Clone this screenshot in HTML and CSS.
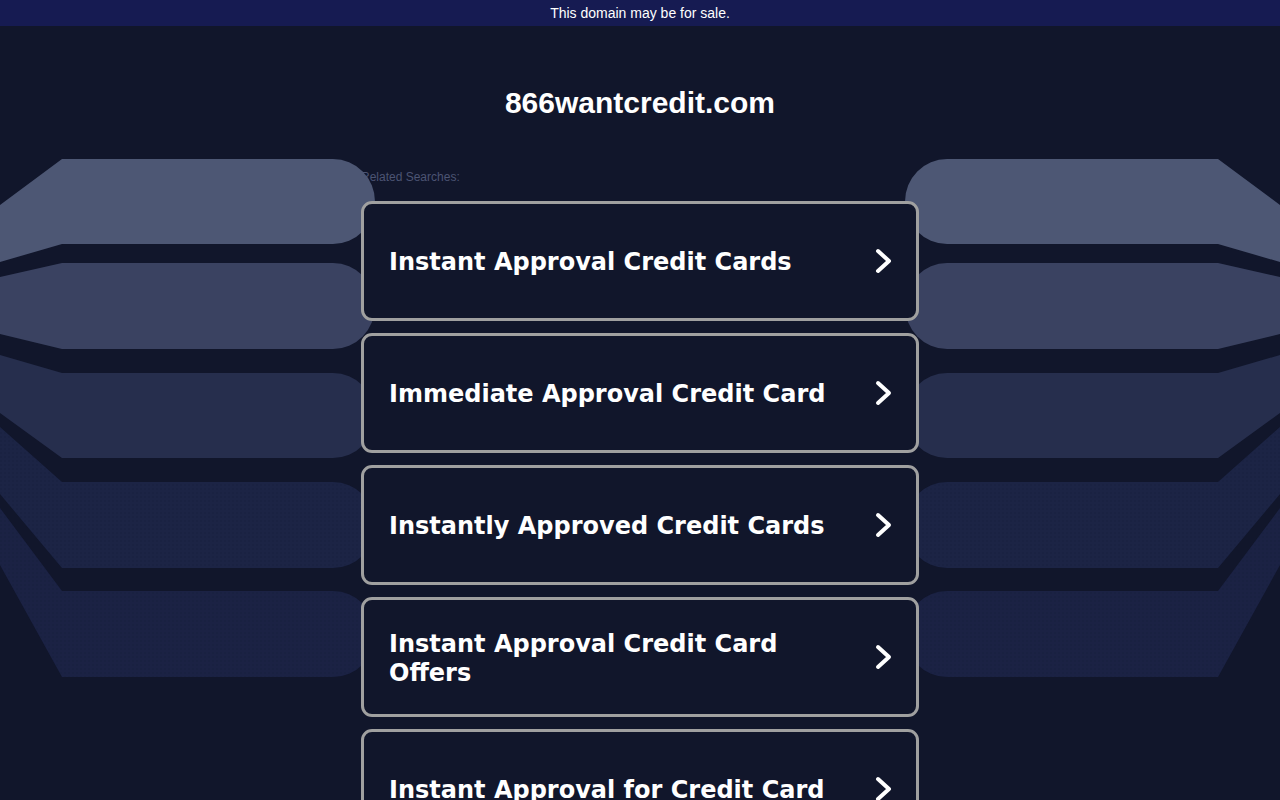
FILE: index.html
```html
<!DOCTYPE html>
<html lang="en">
<head>
<meta charset="utf-8">
<title>866wantcredit.com</title>
<link rel="stylesheet" href="styles.css">
</head>
<body>
<div class="topbar">This domain may be for sale.</div>
<h1 class="domain">866wantcredit.com</h1>
<div class="content">
  <div class="label">Related Searches:</div>
  <svg class="bg" width="1280" height="800" viewBox="0 0 1280 800" aria-hidden="true">
    <defs>
      <pattern id="dots" width="4" height="4" patternUnits="userSpaceOnUse">
        <circle cx="1" cy="1" r="0.7" fill="#121933" opacity="0.6"/>
      </pattern>
      <g id="side">
        <path fill="#4d5774" d="M0,205 L62,159 L333,159 A42,42.5 0 0 1 333,244 L62,244 L0,262 Z"/>
        <path fill="#3a4261" d="M0,277 L62,263 L333,263 A42,43 0 0 1 333,349 L62,349 L0,334 Z"/>
        <path fill="#262e4d" d="M0,355 L62,373 L333,373 A42,42.5 0 0 1 333,458 L62,458 L0,413 Z"/>
        <path fill="#1c2445" d="M0,427 L62,482 L333,482 A42,43 0 0 1 333,568 L62,568 L0,494 Z"/>
        <path fill="url(#dots)" d="M0,427 L62,482 L333,482 A42,43 0 0 1 333,568 L62,568 L0,494 Z"/>
        <path fill="#1b2244" d="M0,508 L62,591 L333,591 A42,43 0 0 1 333,677 L62,677 L0,565 Z"/>
        <path fill="url(#dots)" d="M0,508 L62,591 L333,591 A42,43 0 0 1 333,677 L62,677 L0,565 Z"/>
      </g>
    </defs>
    <use href="#side"/>
    <use href="#side" transform="translate(1280,0) scale(-1,1)"/>
  </svg>
  <div class="list">
    <a class="card" href="#"><span class="text">Instant Approval Credit Cards</span><svg class="chev" viewBox="0 0 18 26" width="18" height="26"><polyline points="4,3 15,13 4,23"/></svg></a>
    <a class="card" href="#"><span class="text">Immediate Approval Credit Card</span><svg class="chev" viewBox="0 0 18 26" width="18" height="26"><polyline points="4,3 15,13 4,23"/></svg></a>
    <a class="card" href="#"><span class="text">Instantly Approved Credit Cards</span><svg class="chev" viewBox="0 0 18 26" width="18" height="26"><polyline points="4,3 15,13 4,23"/></svg></a>
    <a class="card" href="#"><span class="text">Instant Approval Credit Card Offers</span><svg class="chev" viewBox="0 0 18 26" width="18" height="26"><polyline points="4,3 15,13 4,23"/></svg></a>
    <a class="card" href="#"><span class="text">Instant Approval for Credit Card</span><svg class="chev" viewBox="0 0 18 26" width="18" height="26"><polyline points="4,3 15,13 4,23"/></svg></a>
  </div>
</div>
</body>
</html>
```
FILE: styles.css
```css
html, body {
  margin: 0;
  padding: 0;
}
body {
  background: #11162b;
  color: #fff;
  font-family: "Liberation Sans", Arial, sans-serif;
  overflow: hidden;
  height: 800px;
}
.topbar {
  height: 26px;
  background: #161b52;
  color: #fff;
  font-size: 14px;
  line-height: 26px;
  text-align: center;
}
.domain {
  margin: 59px 0 0;
  font-size: 30px;
  line-height: 36px;
  font-weight: bold;
  text-align: center;
  color: #fff;
}
.content {
  width: 558px;
  margin: 49px auto 0;
}
.label {
  font-size: 12px;
  line-height: 14px;
  color: #4c5473;
  margin-bottom: 17px;
}
.bg {
  position: absolute;
  top: 0;
  left: 0;
}
.list {
  position: relative;
  display: flex;
  flex-direction: column;
  gap: 12px;
}
.card {
  box-sizing: border-box;
  height: 120px;
  border: 3px solid #a0a0a0;
  border-radius: 11px;
  background: #11162b;
  display: flex;
  align-items: center;
  padding: 0 24px 0 25px;
  gap: 25px;
  text-decoration: none;
  color: #fff;
}
.text {
  flex: 1;
  padding-top: 3px;
  font-family: "DejaVu Sans", Verdana, sans-serif;
  font-weight: bold;
  font-size: 24px;
  line-height: 29px;
}
.chev {
  flex: none;
}
.chev polyline {
  fill: none;
  stroke: #fff;
  stroke-width: 4;
  stroke-linecap: round;
  stroke-linejoin: round;
}
```
